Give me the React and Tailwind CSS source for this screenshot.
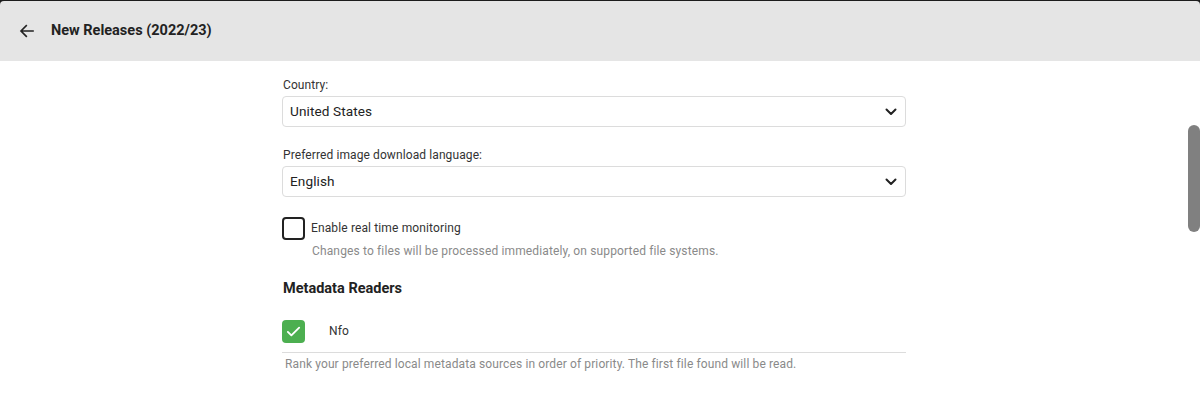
import React, { useState } from 'react';

const Chevron = () => (
    <svg width="12" height="8" viewBox="0 0 12 8" className="text-[#222]">
        <path d="M1.5 1.5 L6 6 L10.5 1.5" fill="none" stroke="currentColor" strokeWidth="2" strokeLinecap="round" strokeLinejoin="round" />
    </svg>
);

const SelectField = ({ label, value, top }) => (
    <div className={top}>
        <label className="block text-[12px] leading-[14px] text-[#333] mb-[4px] ml-[1px] tracking-[0.1px]">{label}</label>
        <div className="h-[31px] w-full border border-[#dcdcdc] rounded-[4px] bg-white flex items-center justify-between pl-[7px] pr-[8px]">
            <span className="text-[13.6px] text-[#222] tracking-[0.1px]">{value}</span>
            <Chevron />
        </div>
    </div>
);

export default function App() {
    const [realtime, setRealtime] = useState(false);
    const [nfo, setNfo] = useState(true);

    return (
        <div className="w-[1200px] h-[393px] bg-white overflow-hidden relative" style={{ fontFamily: 'Roboto, "Noto Sans", sans-serif' }}>
            {/* top bar */}
            <div className="bg-[#1c1c1c] pt-[1px]">
                <div className="h-[60px] bg-[#e5e5e5] rounded-t-[4px] flex items-center pl-[18px]">
                    <svg width="18" height="18" viewBox="0 0 24 24" className="text-[#222]">
                        <path d="M20 12H4.5M11 5l-7 7 7 7" fill="none" stroke="currentColor" strokeWidth="2.2" strokeLinecap="square" />
                    </svg>
                    <h1 className="ml-[15px] text-[14.5px] font-bold text-[#222]">New Releases (2022/23)</h1>
                </div>
            </div>

            {/* content */}
            <div className="w-[624px] ml-[282px] pt-[17px]">
                <SelectField label="Country:" value="United States" />
                <SelectField label="Preferred image download language:" value="English" top="mt-[21px]" />

                <div className="mt-[20px] flex items-start">
                    <button
                        onClick={() => setRealtime(!realtime)}
                        className="w-[23px] h-[23px] rounded-[4px] border-2 border-[#222] bg-white shrink-0"
                    ></button>
                    <div className="ml-[6px]">
                        <div className="text-[12px] leading-[14px] text-[#333] mt-[4px] tracking-[0.13px]">Enable real time monitoring</div>
                        <div className="text-[12px] leading-[14px] text-[#8a8a8a] mt-[9px] ml-[1px] tracking-[0.14px]">
                            Changes to files will be processed immediately, on supported file systems.
                        </div>
                    </div>
                </div>

                <h2 className="mt-[20px] text-[14.5px] font-bold text-[#222] ml-[1px]">Metadata Readers</h2>

                <div className="mt-[20px] flex items-center pb-[9px] border-b border-[#dcdcdc]">
                    <button
                        onClick={() => setNfo(!nfo)}
                        className="w-[23px] h-[23px] rounded-[4px] bg-[#4caf50] flex items-center justify-center shrink-0"
                    >
                        <svg width="17" height="17" viewBox="0 0 24 24">
                            <path d="M4 12.5l5 5L20 6.5" fill="none" stroke="white" strokeWidth="2.6" strokeLinecap="round" strokeLinejoin="round" />
                        </svg>
                    </button>
                    <span className="ml-[24px] text-[12px] text-[#333] tracking-[0.13px]">Nfo</span>
                </div>
                <div className="mt-[4px] ml-[3px] text-[12px] leading-[14px] text-[#8a8a8a] tracking-[0.12px]">
                    Rank your preferred local metadata sources in order of priority. The first file found will be read.
                </div>
            </div>

            {/* scrollbar thumb */}
            <div className="absolute right-0 top-[125px] w-[12px] h-[107px] rounded-[6px] bg-[#808080]"></div>
        </div>
    );
}
